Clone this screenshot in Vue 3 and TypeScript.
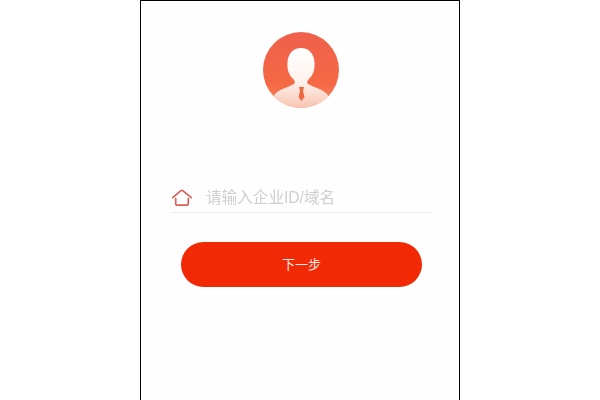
<script setup lang="ts">
const placeholder = '请输入企业ID/域名'
const nextLabel = '下一步'
</script>

<template>
  <div class="page">
    <div class="phone">
      <div class="avatar">
        <svg width="76" height="76" viewBox="0 0 76 76">
          <defs>
            <linearGradient id="disc" x1="0" y1="0" x2="0" y2="1">
              <stop offset="0" stop-color="#ef5f4c" />
              <stop offset="0.7" stop-color="#f56a44" />
              <stop offset="1" stop-color="#f58a6c" />
            </linearGradient>
            <linearGradient id="person" x1="0" y1="0" x2="0" y2="1">
              <stop offset="0" stop-color="#ffffff" />
              <stop offset="0.55" stop-color="#fff3ee" />
              <stop offset="1" stop-color="#f8c4b2" />
            </linearGradient>
            <clipPath id="round">
              <circle cx="38" cy="38" r="38" />
            </clipPath>
          </defs>
          <circle cx="38" cy="38" r="38" fill="url(#disc)" />
          <g clip-path="url(#round)">
            <path
              fill="url(#person)"
              d="M38 16C30 16 25 22 24.500 30C24.300 34 24.500 37 25.500 40C26.500 43 29 46 31 48C32.500 50 32 51.500 30 52.500C25 55.500 17 57 12 62L4 76H72L64 62C59 57 51 55.500 46 52.500C44 51.500 43.500 50 45 48C47 46 49.500 43 50.500 40C51.500 37 51.700 34 51.500 30C51 22 46 16 38 16Z"
            />
            <path fill="#ea6a3e" d="M36 55H41L40 59L41.500 65L38.500 69L35.500 65L37 59Z" />
          </g>
        </svg>
      </div>

      <div class="field">
        <svg class="home" width="20" height="18" viewBox="0 0 20 18">
          <path
            d="M0.800 8.700L8.900 1.700Q9.800 1 10.700 1.700L19.200 8.700M3.700 9.500V14.500Q3.700 16.200 5.400 16.200H14.600Q16.300 16.200 16.300 14.500V9.500"
            fill="none"
            stroke="#d9605a"
            stroke-width="1.700"
            stroke-linecap="round"
          />
        </svg>
        <span class="placeholder">{{ placeholder }}</span>
      </div>

      <button class="next" type="button">{{ nextLabel }}</button>
    </div>
  </div>
</template>

<style scoped>
.page {
  width: 600px;
  height: 400px;
  display: flex;
  justify-content: center;
  background: #ffffff;
  overflow: hidden;
  font-family: "Liberation Sans", "Noto Sans CJK SC", sans-serif;
}

.phone {
  width: 320px;
  height: 400px;
  box-sizing: border-box;
  border: 1px solid #000000;
  border-bottom: none;
  background: #fefefe;
  display: flex;
  flex-direction: column;
  align-items: flex-start;
  padding-top: 31px;
}

.avatar {
  width: 76px;
  height: 76px;
  margin-left: 122px;
  filter: blur(0.5px);
}

.avatar svg {
  display: block;
}

.field {
  width: 260px;
  height: 28px;
  margin-top: 76px;
  margin-left: 30px;
  border-bottom: 1px solid #eeeeee;
  display: flex;
  align-items: center;
  gap: 14px;
}

.home {
  margin-left: 1px;
  flex: none;
}

.placeholder {
  font-size: 15.600px;
  color: #cfcfcf;
  line-height: 22px;
  filter: blur(0.3px);
}

.next {
  width: 241px;
  height: 45px;
  margin-top: 29px;
  margin-left: 40px;
  border: none;
  border-radius: 23px;
  background: #f12a05;
  color: #ffe9e2;
  font-family: inherit;
  font-size: 13px;
  padding: 0 0 2px;
}
</style>
